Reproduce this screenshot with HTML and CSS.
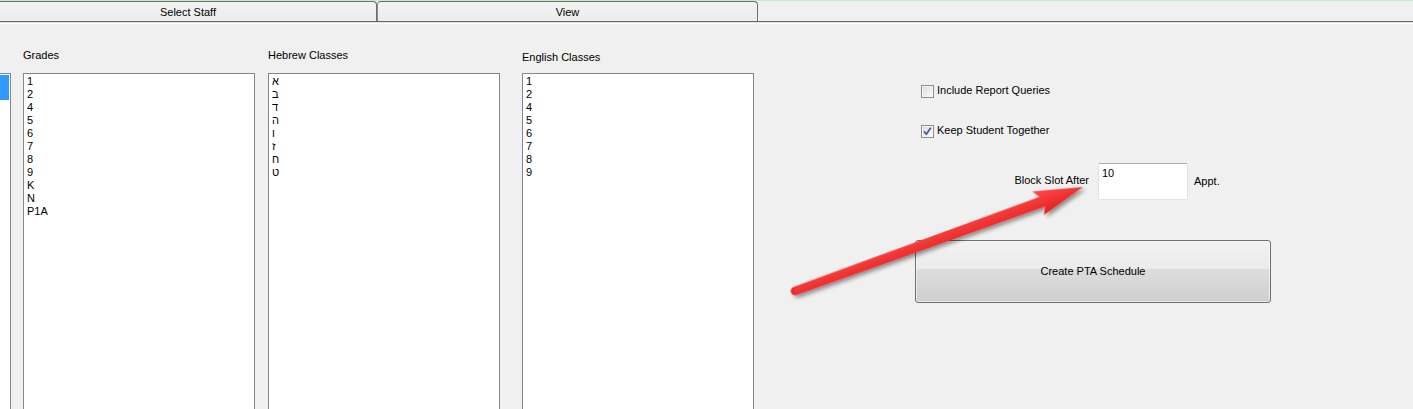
FILE: index.html
```html
<!DOCTYPE html>
<html>
<head>
<meta charset="utf-8">
<link rel="stylesheet" href="styles.css">
</head>
<body>
<div class="tabs">
  <div class="tab tab-staff">Select Staff</div>
  <div class="tab tab-view">View</div>
</div>
<div class="tabline"></div>
<div class="panel">
  <div class="cutbox"><div class="cutsel"></div></div>
  <div class="col col-grades">
    <div class="lbl">Grades</div>
    <div class="list">
      <div>1</div><div>2</div><div>4</div><div>5</div><div>6</div><div>7</div><div>8</div><div>9</div><div>K</div><div>N</div><div>P1A</div>
    </div>
  </div>
  <div class="col col-hebrew">
    <div class="lbl">Hebrew Classes</div>
    <div class="list">
      <div>א</div><div>ב</div><div>ד</div><div>ה</div><div>ו</div><div>ז</div><div>ח</div><div>ט</div>
    </div>
  </div>
  <div class="col col-english">
    <div class="lbl">English Classes</div>
    <div class="list">
      <div>1</div><div>2</div><div>4</div><div>5</div><div>6</div><div>7</div><div>8</div><div>9</div>
    </div>
  </div>
  <div class="right">
    <div class="chkrow row-first">
      <span class="chk"></span><span class="chktext">Include Report Queries</span>
    </div>
    <div class="chkrow row-second">
      <span class="chk"><svg width="11" height="11" viewBox="0 0 11 11"><path d="M2 5.2 L4.3 8.2 L8.8 1.8" fill="none" stroke="#4a5e9c" stroke-width="1.8" stroke-linejoin="round"/></svg></span><span class="chktext">Keep Student Together</span>
    </div>
    <div class="blockrow">
      <div class="blocklbl">Block Slot After</div>
      <div class="blockinput">10</div>
      <div class="appt">Appt.</div>
    </div>
    <div class="btn">Create PTA Schedule</div>
  </div>
</div>
<svg class="arrow" width="1413" height="409" viewBox="0 0 1413 409">
  <defs>
    <filter id="sh" x="-10%" y="-50%" width="120%" height="200%">
      <feGaussianBlur in="SourceAlpha" stdDeviation="2"/>
      <feOffset dx="2" dy="3" result="b"/>
      <feComponentTransfer><feFuncA type="linear" slope="0.45"/></feComponentTransfer>
      <feMerge><feMergeNode/><feMergeNode in="SourceGraphic"/></feMerge>
    </filter>
    <linearGradient id="rg" x1="0" y1="0" x2="0" y2="1">
      <stop offset="0" stop-color="#ff4a4a"/>
      <stop offset="1" stop-color="#e21f1f"/>
    </linearGradient>
  </defs>
  <g filter="url(#sh)" transform="translate(795 291) rotate(-19.86)">
    <circle cx="0" cy="0" r="4.3" fill="#ee2a2a"/>
    <polygon fill="url(#rg)" points="0,-4.3 262,-5.6 257,-13 306,0 260,13 264,5.6 0,4.3"/>
  </g>
</svg>
</body>
</html>
```
FILE: styles.css
```css
html, body {
  margin: 0;
  padding: 0;
}
body {
  background: #f0f0f0;
  font-family: "Liberation Sans", "DejaVu Sans", Arial, sans-serif;
  font-size: 11px;
  line-height: 13px;
  color: #000;
  width: 1413px;
  height: 409px;
  overflow: hidden;
  position: relative;
}
.tabs {
  display: flex;
  height: 20px;
  border-top: 1px solid #bff2c9;
}
.tab {
  box-sizing: border-box;
  height: 20px;
  border-top: 1px solid #6e6e6e;
  background: linear-gradient(#f3f3f3, #ececec);
  text-align: center;
  padding-top: 4px;
}
.tab-staff {
  width: 377px;
  border-right: 1px solid #6e6e6e;
  border-top-right-radius: 4px;
}
.tab-view {
  width: 381px;
  border-left: 1px solid #8a8a8a;
  border-right: 1px solid #6e6e6e;
  border-top-left-radius: 4px;
  border-top-right-radius: 4px;
}
.tabline {
  height: 1px;
  background: #e2e2e2;
  border-top: 1px solid #676767;
  border-bottom: 1px solid #ffffff;
}
.panel {
  display: flex;
  align-items: flex-start;
}
.cutbox {
  box-sizing: border-box;
  width: 11px;
  height: 336px;
  margin-top: 49px;
  background: #fff;
  border-top: 1px solid #828790;
  border-right: 1px solid #828790;
}
.cutsel {
  width: 9px;
  height: 25px;
  margin-top: 1px;
  background: #3399ff;
}
.col {
  width: 232px;
  padding-top: 25px;
}
.col-grades { margin-left: 12px; }
.col-hebrew { margin-left: 13px; }
.col-english { margin-left: 22px; }
.lbl {
  height: 13px;
  margin-bottom: 11px;
}
.col-english .lbl {
  margin-top: 2px;
  margin-bottom: 9px;
}
.list {
  box-sizing: border-box;
  height: 336px;
  background: #fff;
  border: 1px solid #828790;
  border-bottom: none;
  padding: 1px 3px;
}
.right {
  width: 356px;
  margin-left: 161px;
}
.chkrow {
  display: flex;
  align-items: flex-start;
  height: 14px;
  padding-left: 6px;
}
.row-first { margin-top: 60px; }
.row-second { margin-top: 26px; }
.chk {
  box-sizing: border-box;
  width: 13px;
  height: 13px;
  margin-top: 1px;
  border: 1px solid #8e8f8f;
  background: linear-gradient(135deg, #dcdcdc, #fbfbfb);
  box-shadow: inset 0 0 0 1px #f4f4f4;
  display: flex;
  align-items: center;
  justify-content: center;
}
.chk svg { display: block; }
.chktext {
  margin-left: 3px;
}
.blockrow {
  display: flex;
  align-items: flex-start;
  margin-top: 25px;
}
.blocklbl {
  width: 174px;
  text-align: right;
  margin-top: 11px;
}
.blockinput {
  box-sizing: border-box;
  width: 90px;
  height: 37px;
  margin-left: 9px;
  background: #fff;
  border: 1px solid #e2e3ea;
  border-top-color: #abadb3;
  border-radius: 2px;
  padding: 3px 0 0 3px;
}
.appt {
  margin-left: 6px;
  margin-top: 12px;
}
.btn {
  box-sizing: border-box;
  margin-top: 40px;
  height: 63px;
  border: 1px solid #707070;
  border-radius: 3px;
  background: linear-gradient(#f2f2f2 0%, #ebebeb 45%, #dddddd 46%, #cfcfcf 100%);
  box-shadow: inset 0 0 0 1px rgba(255,255,255,0.55);
  display: flex;
  align-items: center;
  justify-content: center;
}
.arrow {
  position: absolute;
  left: 0;
  top: 0;
  pointer-events: none;
}
```
